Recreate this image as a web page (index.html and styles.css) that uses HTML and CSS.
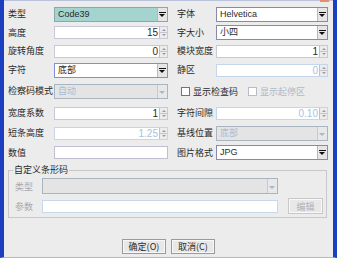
FILE: index.html
```html
<!DOCTYPE html>
<html>
<head>
<meta charset="utf-8">
<link rel="stylesheet" href="styles.css">
</head>
<body>
<div class="screen">
  <div class="window">
    <div class="topline"><span class="closebit"></span></div>
    <div class="content">
      <div class="form">
        <span class="lbl">类型</span>
        <div class="combo teal"><span class="val">Code39</span><span class="arrow"><i></i></span></div>
        <span class="lbl r">字体</span>
        <div class="combo"><span class="val">Helvetica</span><span class="arrow"><i></i></span></div>

        <span class="lbl">高度</span>
        <div class="spin"><span class="num">15</span><span class="btns"><b></b><b class="dn"></b></span></div>
        <span class="lbl r">字大小</span>
        <div class="combo"><span class="val">小四</span><span class="arrow"><i></i></span></div>

        <span class="lbl">旋转角度</span>
        <div class="spin"><span class="num">0</span><span class="btns"><b></b><b class="dn"></b></span></div>
        <span class="lbl r">模块宽度</span>
        <div class="spin"><span class="num">1</span><span class="btns"><b></b><b class="dn"></b></span></div>

        <span class="lbl">字符</span>
        <div class="combo focus"><span class="val">底部</span><span class="arrow"><i></i></span></div>
        <span class="lbl r">静区</span>
        <div class="spin dis"><span class="num">0</span><span class="btns"><b></b><b class="dn"></b></span></div>

        <span class="lbl">检察码模式</span>
        <div class="combo dis"><span class="val">自动</span><span class="arrow"><i></i></span></div>
        <div class="checks">
          <span class="chk"><span class="box"></span>显示检查码</span>
          <span class="chk dis"><span class="box"></span>显示起停区</span>
        </div>

        <span class="lbl">宽度系数</span>
        <div class="spin"><span class="num">1</span><span class="btns"><b></b><b class="dn"></b></span></div>
        <span class="lbl r">字符间隙</span>
        <div class="spin dis"><span class="num">0.10</span><span class="btns"><b></b><b class="dn"></b></span></div>

        <span class="lbl">短条高度</span>
        <div class="spin dis"><span class="num">1.25</span><span class="btns"><b></b><b class="dn"></b></span></div>
        <span class="lbl r">基线位置</span>
        <div class="combo dis"><span class="val">底部</span><span class="arrow"><i></i></span></div>

        <span class="lbl">数值</span>
        <div class="text"></div>
        <span class="lbl r">图片格式</span>
        <div class="combo"><span class="val">JPG</span><span class="arrow"><i></i></span></div>
      </div>

      <fieldset class="group">
        <legend>自定义条形码</legend>
        <div class="grow">
          <span class="glbl">类型</span>
          <div class="combo dis wide"><span class="val"></span><span class="arrow"><i></i></span></div>
        </div>
        <div class="grow">
          <span class="glbl">参数</span>
          <div class="text dis wide"></div>
          <span class="btn dis edit">编辑</span>
        </div>
      </fieldset>

      <div class="actions">
        <span class="btn">确定(O)</span>
        <span class="btn">取消(C)</span>
      </div>
    </div>
  </div>
  <div class="under"></div>
</div>
</body>
</html>
```
FILE: styles.css
```css
* { box-sizing: border-box; }
html, body { margin: 0; padding: 0; background: #ffffff; }
body {
  font-family: "Noto Sans CJK SC", "Liberation Sans", sans-serif;
  font-size: 9px;
  color: #2a2a2a;
}
.screen { width: 340px; height: 260px; overflow: hidden; background: #fff; }
.window {
  width: 337px;
  height: 258px;
  background: #ececec;
  border-left: 4px solid #1b3fbf;
  border-right: 4px solid #1b3fbf;
  border-bottom: 1px solid #8ec3f0;
  display: flex;
  flex-direction: column;
}
.topline {
  height: 1px;
  background: #b9c4dc;
  position: relative;
}
.closebit {
  position: absolute;
  right: 4px;
  top: 0;
  width: 9px;
  height: 2px;
  background: #e0906a;
}
.content { padding: 4px 0 0 4px; flex: 1; display: flex; flex-direction: column; }
.form {
  display: grid;
  grid-template-columns: 46px 114px 48px 112px;
  grid-template-rows: 18px 19px 18px 20px 22px 22px 18px 21px;
  align-items: center;
}
.lbl { line-height: 12px; white-space: nowrap; }
.lbl.r { padding-left: 9px; }

.combo, .spin, .text {
  height: 15px;
  display: flex;
  align-items: stretch;
  border: 1px solid #8a8aa8;
  background: #fff;
}
.combo .val {
  flex: 1;
  padding-left: 3px;
  line-height: 13px;
  font-family: "Liberation Sans", "Noto Sans CJK SC", sans-serif;
  font-size: 9px;
  overflow: hidden;
  white-space: nowrap;
}
.combo.teal { background: #a3d4d0; border-color: #8aa6b0; }
.combo.focus { border-color: #7f8fd8; }
.combo .arrow {
  width: 10px;
  background: #e6e6e6;
  border-left: 1px solid #b8b8c8;
  display: flex;
  align-items: center;
  justify-content: center;
}
.combo .arrow i {
  display: block;
  width: 7px;
  height: 5px;
  border-top: 1px solid #111;
  position: relative;
}
.combo .arrow i::after {
  content: "";
  position: absolute;
  left: 0;
  top: 1px;
  border-left: 3.5px solid transparent;
  border-right: 3.5px solid transparent;
  border-top: 3px solid #111;
}
.combo.dis { background: #e4e4e4; border-color: #a9b6c2; color: #a8bcd4; }
.combo.dis .arrow { background: #e8e8e8; border-left-color: #c8c8d0; }
.combo.dis .arrow i { border-top-color: transparent; }
.combo.dis .arrow i::after { border-top-color: #a0b8d8; }

.spin { height: 13px; border-color: #c8c8d8; }
.spin .num {
  flex: 1;
  text-align: right;
  padding-right: 1px;
  line-height: 11px;
  font-family: "Liberation Sans", sans-serif;
  font-size: 10px;
}
.spin .btns {
  width: 8px;
  display: flex;
  flex-direction: column;
  border-left: 1px solid #c0c0c8;
  background: #ececec;
}
.spin .btns b {
  flex: 1;
  position: relative;
  border-bottom: 1px solid #c4c4cc;
}
.spin .btns b.dn { border-bottom: none; }
.spin .btns b::after {
  content: "";
  position: absolute;
  left: 2px;
  top: 2px;
  border-left: 2px solid transparent;
  border-right: 2px solid transparent;
  border-bottom: 2px solid #9a9aa8;
}
.spin .btns b.dn::after {
  border-bottom: none;
  border-top: 2px solid #9a9aa8;
  top: 1px;
}
.spin.dis { border-color: #c6d6ea; }
.spin.dis .num { color: #a6c2e2; }

.text { height: 13px; border-color: #bfbfcf; }
.text.dis { border-color: #c8d8ea; }

.checks {
  grid-column: 3 / 5;
  display: flex;
  gap: 10px;
  padding-left: 13px;
  align-items: center;
}
.chk { display: flex; align-items: center; gap: 3px; white-space: nowrap; }
.chk .box {
  width: 9px;
  height: 9px;
  border: 1px solid #707088;
  background: #fff;
}
.chk.dis { color: #b0b8c8; }
.chk.dis .box { border-color: #b8bcc8; }

.group {
  margin: 1px 6px 0 0;
  padding: 0 0 3px 6px;
  border: 1px solid #c8c8c8;
  height: 54px;
  min-width: 0;
}
.group legend {
  padding: 0 1px;
  margin-left: -2px;
  line-height: 12px;
}
.grow {
  display: flex;
  align-items: center;
  height: 20px;
}
.glbl { width: 27px; color: #a8a8b0; }
.wide { width: 236px; }
.combo.wide { height: 16px; }
.btn {
  display: inline-flex;
  align-items: center;
  justify-content: center;
  height: 15px;
  width: 44px;
  border: 1px solid #9a9a9a;
  background: #e8e8e8;
  box-shadow: inset 0 0 0 1px #f8f8f8;
  font-size: 9px;
  white-space: nowrap;
}
.btn.dis { color: #b0b0b8; border-color: #c8c8c8; }
.edit { width: 35px; height: 16px; margin-left: 10px; }
.actions {
  margin-top: auto;
  margin-bottom: 3px;
  display: flex;
  justify-content: center;
  gap: 5px;
  padding-right: 4px;
}
.under { height: 2px; background: #fff; }
```
